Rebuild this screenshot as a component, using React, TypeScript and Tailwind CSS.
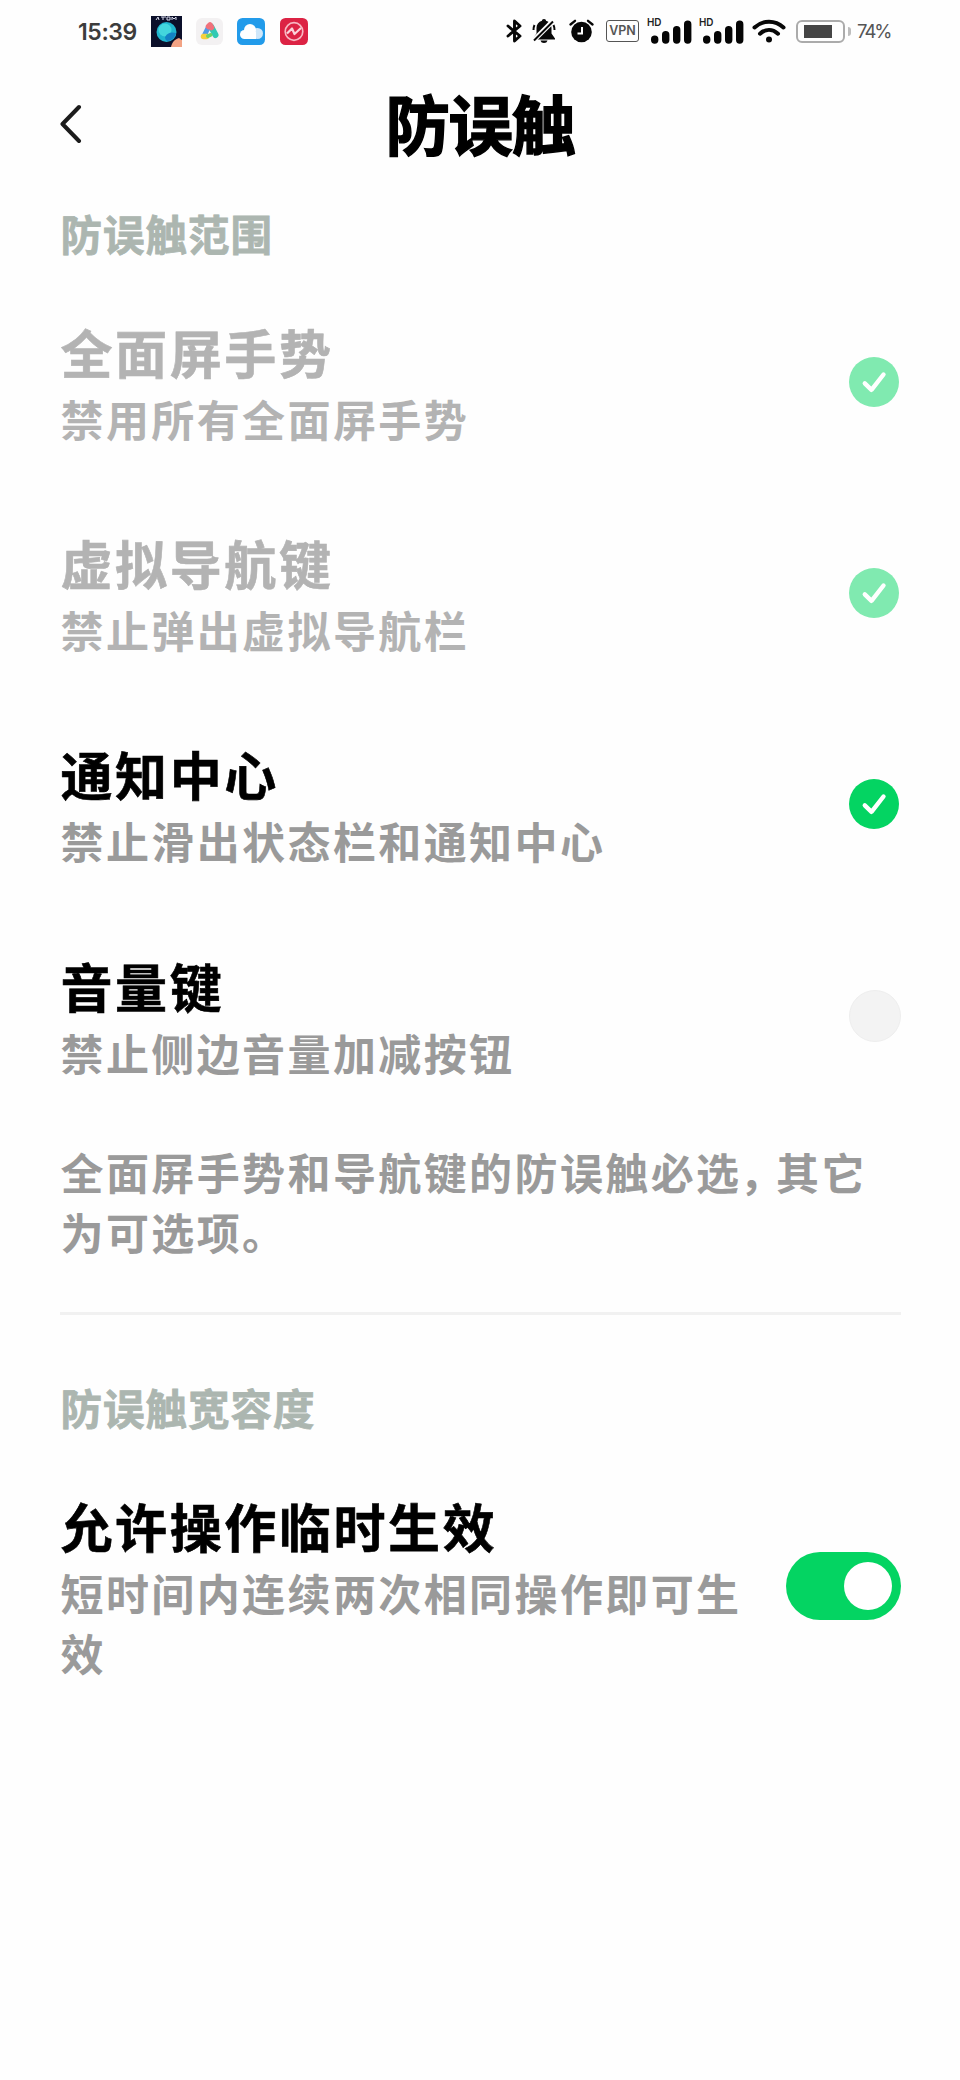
import { useState } from 'react'

interface Option {
  id: string
  title: string
  desc: string
  locked: boolean
}

const OPTIONS: Option[] = [
  { id: 'gesture', title: '全面屏手势', desc: '禁用所有全面屏手势', locked: true },
  { id: 'navbar', title: '虚拟导航键', desc: '禁止弹出虚拟导航栏', locked: true },
  { id: 'notify', title: '通知中心', desc: '禁止滑出状态栏和通知中心', locked: false },
  { id: 'volume', title: '音量键', desc: '禁止侧边音量加减按钮', locked: false },
]

function AppIcons() {
  return (
    <>
      <svg className="ml-[14px] h-[31px] w-[31px]" viewBox="0 0 31 31">
        <rect width="31" height="31" fill="#0b0f2a" />
        <path d="M5 4l2-3 1 3M10 1h5M12 1v3M16 1v3h3V1zM21 4V1l2 2 2-2v3" stroke="#d9dcec" strokeWidth="1" fill="none" />
        <circle cx="15.500" cy="16" r="10" fill="#1fb5cf" />
        <circle cx="14" cy="14" r="6.500" fill="#43d6dd" />
        <path d="M14 21c3-5 7-5 11-4-1 5-5 8-9 8-1-1-2-2-2-4z" fill="#1482c4" />
        <path d="M20 31c1-5 4-8 8-9l3 2v7z" fill="#f2a384" />
      </svg>
      <svg className="ml-[14px] h-[27px] w-[27px]" viewBox="0 0 27 27">
        <rect width="27" height="27" rx="6" fill="#f3f1f2" />
        <path d="M15 8.500l4.500 8.500" stroke="#2fc9b4" strokeWidth="6" strokeLinecap="round" />
        <path d="M12.500 9L9 16" stroke="#4f9be8" strokeWidth="5" strokeLinecap="round" />
        <path d="M12.500 8.500l1.500-1.500 1.500 2.500" stroke="#f0717b" strokeWidth="5.500" strokeLinecap="round" strokeLinejoin="round" fill="none" />
        <path d="M7.500 18.500h3" stroke="#f6cf3f" strokeWidth="5.500" strokeLinecap="round" />
        <path d="M12 18l2.500-1" stroke="#6bd36a" strokeWidth="4" strokeLinecap="round" />
      </svg>
      <svg className="ml-[14px] h-[27px] w-[28px]" viewBox="0 0 28 27">
        <rect width="28" height="27" rx="5.500" fill="#229bea" />
        <circle cx="20.500" cy="15.500" r="5.500" fill="#cfe7fa" />
        <circle cx="13" cy="12" r="6" fill="#fff" />
        <circle cx="7.500" cy="16.500" r="4.500" fill="#fff" />
        <rect x="7" y="14" width="12" height="7" fill="#fff" />
      </svg>
      <svg className="ml-[15px] h-[27px] w-[28px]" viewBox="0 0 28 27">
        <rect width="28" height="27" rx="5.500" fill="#dc2344" />
        <circle cx="14" cy="13.500" r="8.800" stroke="#f7b7c2" strokeWidth="1.700" fill="none" />
        <path d="M7 15.500l5-5 2.500 5.500 6.500-6" stroke="#fbd3da" strokeWidth="2.200" strokeLinejoin="round" fill="none" />
      </svg>
    </>
  )
}

function Signal() {
  return (
    <svg className="h-[28px] w-[46px]" viewBox="0 0 46 28">
      <text x="0" y="9" fontSize="10.500" fontWeight="600" fontFamily="Inter, sans-serif" textLength="14.500" lengthAdjust="spacingAndGlyphs" fill="#222">
        HD
      </text>
      <g stroke="#050505" strokeWidth="7.400" strokeLinecap="round">
        <path d="M7.700 22.200v.8M18.700 17.700v5.300M29.700 12.700v10.300M40.700 7.200v15.800" />
      </g>
    </svg>
  )
}

function StatusBar() {
  return (
    <div className="flex h-[62px] items-center pl-[78px] text-[#3c3c3c]">
      <span className="mt-[3px] w-[59px] font-[Inter] text-[23px] leading-none font-semibold tracking-[-0.400px] whitespace-nowrap">15:39</span>
      <AppIcons />

      {/* bluetooth */}
      <svg className="ml-[197px] h-[24px] w-[19px]" viewBox="0 0 19 24" fill="none" stroke="#080808" strokeWidth="2.900" strokeLinejoin="round" strokeLinecap="round">
        <path d="M3 7l12 10-5.500 5V2L15 7 3 17" />
      </svg>
      {/* muted */}
      <svg className="ml-[8px] h-[24px] w-[24px]" viewBox="0 0 24 24">
        <path d="M12 0c1.300 0 2 .8 2 1.800 3.500 1 5.500 3.600 5.500 7.200v5.500l3.500 5V20.500H1V19.500l3.500-5V9c0-3.600 2-6.200 5.500-7.200C10 .8 10.700 0 12 0z" fill="#080808" />
        <path d="M8.500 21.500h7c-.5 1.700-1.700 2.500-3.500 2.500s-3-.8-3.500-2.500z" fill="#080808" />
        <path d="M1 22L22 1" stroke="#fff" strokeWidth="5" />
        <path d="M2 21.500L21 2.500" stroke="#080808" strokeWidth="2" />
        <path d="M1.500 11c0-2 .3-3.500 1-5M22.500 11c0-2-.3-3.500-1-5" stroke="#080808" strokeWidth="2" fill="none" />
      </svg>
      {/* alarm */}
      <svg className="ml-[13px] h-[24px] w-[25px]" viewBox="0 0 25 24">
        <circle cx="12.500" cy="13" r="10.300" fill="#080808" />
        <path d="M1.500 5.500L6 1.800M23.500 5.500L19 1.800" stroke="#080808" strokeWidth="2.300" strokeLinecap="round" />
        <path d="M13 8v6.500H8.500" stroke="#fff" strokeWidth="2" fill="none" />
      </svg>
      <span className="ml-[12px] flex h-[22px] w-[33px] items-center justify-center rounded-[3px] border-[1.500px] border-[#555] font-[Inter] text-[12.500px] leading-none font-semibold text-[#555]">
        VPN
      </span>
      <div className="mt-[-1px] ml-[8px] flex gap-[6px]">
        <Signal />
        <Signal />
      </div>
      {/* wifi */}
      <svg className="ml-[7px] h-[24px] w-[34px]" viewBox="0 0 34 24" fill="none" stroke="#080808" strokeWidth="4" strokeLinecap="round">
        <path d="M2.500 8.500c8.500-7.800 20.500-7.800 29 0M8 14.700c5.500-5 12.500-5 18 0" />
        <circle cx="17" cy="20.500" r="3" fill="#080808" stroke="none" />
      </svg>
      <span className="ml-[10px] flex h-[23px] w-[49px] items-center rounded-[6px] border-2 border-[#ababab] pl-[6px]">
        <span className="h-[13px] w-[28px] bg-[#454545]" />
      </span>
      <span className="ml-[3px] h-[9px] w-[3px] rounded-r-full bg-[#bdbdbd]" />
      <span className="ml-[6px] font-[Inter] text-[18.500px] leading-none tracking-[-2px] text-[#555]">74%</span>
    </div>
  )
}

function CheckCircle({ checked, locked }: { checked: boolean; locked: boolean }) {
  if (!checked) {
    return <span className="h-[52px] w-[52px] rounded-full border border-[#eeeeee] bg-[#f3f3f3]" />
  }
  return (
    <span className={`mr-[2px] flex h-[50px] w-[50px] items-center justify-center rounded-full ${locked ? 'bg-[#80eab0]' : 'bg-[#04d462]'}`}>
      <svg className="h-[50px] w-[50px]" viewBox="0 0 50 50" fill="none" stroke="#fff" strokeWidth="4.400" strokeLinecap="round" strokeLinejoin="round">
        <path d="M15.800 26.300l6.700 6.500L34.500 17.500" />
      </svg>
    </span>
  )
}

export default function App() {
  const [checked, setChecked] = useState<string[]>(['gesture', 'navbar', 'notify'])
  const [allowTemp, setAllowTemp] = useState(true)

  function toggle(id: string) {
    setChecked(checked.includes(id) ? checked.filter(c => c !== id) : [...checked, id])
  }

  return (
    <div className="h-[2080px] w-[960px] overflow-hidden bg-[#fefefe] font-['Noto_Sans_CJK_SC',sans-serif]" lang="zh-CN">
      <StatusBar />

      <header className="grid h-[124px] grid-cols-[200px_1fr_200px] items-center">
        <button className="pl-[60px]">
          <svg className="h-[40px] w-[22px]" viewBox="0 0 22 40" fill="none" stroke="#1c1c1c" strokeWidth="4" strokeLinecap="round" strokeLinejoin="round">
            <path d="M19 3L2.500 20 19 37" />
          </svg>
        </button>
        <h1 className="-mt-[4px] text-center text-[64.500px] leading-[80px] font-bold tracking-[-1.500px] text-black [-webkit-text-stroke:1.400px_black]">防误触</h1>
      </header>

      <main className="pr-[59px] pl-[60.500px]">
        <h2 className="mt-[17px] text-[41.500px] leading-[60px] font-bold tracking-[1px] text-[#acb6b0] [-webkit-text-stroke:0.800px_#acb6b0]">防误触范围</h2>

        <div className="mt-[13px]">
          {OPTIONS.map(o => (
            <button
              key={o.id}
              disabled={o.locked}
              onClick={() => toggle(o.id)}
              className="flex h-[211.300px] w-full items-center justify-between text-left"
            >
              <div>
                <div className={`text-[52px] leading-[72px] font-bold tracking-[2.600px] [-webkit-text-stroke:0.600px_currentColor] ${o.locked ? 'text-[#b3b3b3]' : 'text-black'}`}>
                  {o.title}
                </div>
                <div className={`text-[43px] leading-[60px] font-bold tracking-[2.400px] ${o.locked ? 'text-[#b3b3b3]' : 'text-[#9a9a9a]'}`}>
                  {o.desc}
                </div>
              </div>
              <CheckCircle checked={checked.includes(o.id)} locked={o.locked} />
            </button>
          ))}
        </div>

        <p className="mt-[20px] text-[43px] leading-[60px] font-bold tracking-[2.400px] text-[#9a9a9a]">
          全面屏手势和导航键的防误触必选<span className="-ml-[2px] tracking-[-6.500px]">，</span>其它
          <br />
          为可选项。
        </p>

        <div className="mt-[51px] -ml-[1px] h-[3px] bg-[#f1f1f1]" />

        <h2 className="mt-[62px] text-[41.500px] leading-[60px] font-bold tracking-[1px] text-[#acb6b0] [-webkit-text-stroke:0.800px_#acb6b0]">防误触宽容度</h2>

        <div className="mt-[53px] flex items-center justify-between">
          <div className="w-[700px]">
            <div className="text-[52px] leading-[72px] font-bold tracking-[2.600px] text-black [-webkit-text-stroke:0.600px_currentColor]">允许操作临时生效</div>
            <div className="text-[43px] leading-[60px] font-bold tracking-[2.400px] text-[#9a9a9a]">短时间内连续两次相同操作即可生效</div>
          </div>
          <button
            onClick={() => setAllowTemp(!allowTemp)}
            className={`flex h-[68px] w-[115px] shrink-0 items-center rounded-full px-[9px] ${allowTemp ? 'justify-end bg-[#04d462]' : 'justify-start bg-[#e5e5e5]'}`}
          >
            <span className="h-[48px] w-[48px] rounded-full bg-white" />
          </button>
        </div>
      </main>
    </div>
  )
}
